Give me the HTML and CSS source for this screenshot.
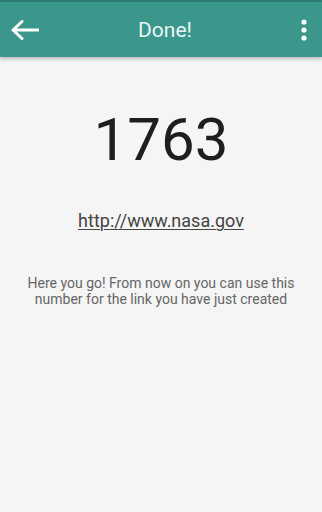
FILE: index.html
```html
<!DOCTYPE html>
<html>
<head>
<meta charset="utf-8">
<link rel="stylesheet" href="styles.css">
</head>
<body>
<div class="status"></div>
<header class="bar">
  <svg class="back" width="28" height="20" viewBox="0 0 28 20"><path d="M2 10H27M11 1.5L2 10l9 8.5" fill="none" stroke="#fff" stroke-width="3" stroke-linecap="round" stroke-linejoin="round"/></svg>
  <h1 class="title">Done!</h1>
  <svg class="more" width="8" height="24" viewBox="0 0 8 24"><circle cx="4" cy="4" r="2.6" fill="#fff"/><circle cx="4" cy="12" r="2.6" fill="#fff"/><circle cx="4" cy="20" r="2.6" fill="#fff"/></svg>
</header>
<main class="content">
  <div class="number">1763</div>
  <a class="link">http://www.nasa.gov</a>
  <p class="note">Here you go! From now on you can use this number for the link you have just created</p>
</main>
</body>
</html>
```
FILE: styles.css
```css
html, body { margin: 0; padding: 0; }
body {
  width: 322px; height: 512px; overflow: hidden;
  background: #f5f5f5;
  font-family: Roboto, "Noto Sans", sans-serif;
}
.status { height: 2px; background: #2f8076; }
.bar {
  height: 55px; background: #3b978c;
  display: flex; align-items: center; justify-content: space-between;
  padding: 0 14px 0 11px;
  box-shadow: 0 2px 4px rgba(0,0,0,0.25);
  position: relative;
}
.title {
  margin: 0; font-weight: 400; font-size: 21px; color: #e9f6f3;
  position: absolute; left: 0; right: 0; text-align: center; pointer-events: none;
  padding-left: 8px;
}
.back { display: block; }
.more { display: block; }
.content {
  display: flex; flex-direction: column; align-items: center;
}
.number {
  font-size: 60px; font-weight: 400; color: #1e1e1e; line-height: 1;
  margin-top: 53px;
}
.link {
  margin-top: 40px; font-size: 18px; color: #444; text-decoration: underline;
  text-underline-offset: 2px; text-decoration-thickness: 1px;
}
.note {
  margin: 44px 24px 0; font-size: 14px; line-height: 16px; color: #666; text-align: center;
}
```
